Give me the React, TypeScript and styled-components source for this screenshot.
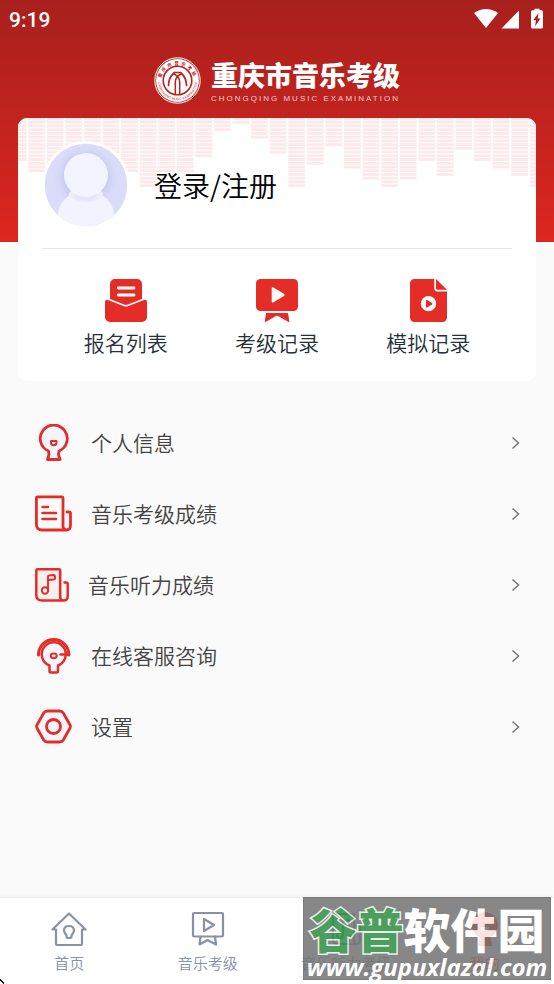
import React from "react";
import styled, { createGlobalStyle } from "styled-components";

const RED = "#e52d27";
const SLATE = "#8992a5";

const GlobalStyle = createGlobalStyle`
  *, *::before, *::after { box-sizing: border-box; }
  body {
    margin: 0;
    background: #fafafa;
    font-family: "Noto Sans CJK SC", "Noto Sans", sans-serif;
    font-weight: 350;
  }
  button { font: inherit; border: 0; background: none; padding: 0; cursor: pointer; }
  a { color: inherit; text-decoration: none; }
  svg { display: block; flex: none; }
`;

const Page = styled.div`
  position: relative;
  display: flex;
  flex-direction: column;
  min-height: 100vh;
  overflow: hidden;
  background: linear-gradient(#a8201d, #dd261f) top / 100% 242px no-repeat #fafafa;
`;

const StatusBar = styled.div`
  display: flex;
  align-items: center;
  justify-content: space-between;
  height: 40px;
  padding: 0 9px;
  color: #fff;
  font: 500 21px/40px Roboto, sans-serif;
`;

const StatusIcons = styled.div`
  display: flex;
  align-items: center;
  padding-bottom: 2px;
`;

const Brand = styled.header`
  display: flex;
  justify-content: center;
  align-items: center;
  gap: 10px;
  height: 78px;
  padding-top: 3px;
  color: #fff;
`;

const BrandText = styled.div`
  display: flex;
  flex-direction: column;
`;

const BrandName = styled.h1`
  margin: 0;
  font-size: 27px;
  font-weight: 900;
  line-height: 36px;
`;

const BrandLatin = styled.span`
  font: 8px/12px "Liberation Sans", sans-serif;
  letter-spacing: 2px;
  white-space: nowrap;
  opacity: 0.75;
  margin-right: -2px;
`;

const Card = styled.section`
  position: relative;
  margin: 0 18px;
  padding: 0 24px 23px;
  background: #fff;
  border-radius: 9px;
  overflow: hidden;
`;

const Equalizer = styled.svg`
  position: absolute;
  top: 0;
  left: 0;
  width: 100%;
`;

const Profile = styled.button`
  position: relative;
  display: flex;
  align-items: center;
  gap: 24px;
  width: 100%;
  height: 131px;
  padding-top: 4px;
  border-bottom: 1px solid #e4e4e4;
  color: #000;
  font-size: 28px;
  line-height: 40px;
`;

const Actions = styled.div`
  display: flex;
  padding: 30px 8px 0;
`;

const Action = styled.button`
  flex: 1;
  display: flex;
  flex-direction: column;
  align-items: center;
  gap: 4px;
  color: #26303c;
  font-size: 21px;
  line-height: 32px;
`;

const Menu = styled.nav`
  display: flex;
  flex-direction: column;
  flex: 1;
  padding: 26px 34px 0 35px;
`;

const MenuLink = styled.a`
  display: flex;
  align-items: center;
  gap: 19px;
  height: 71px;
  color: #444;
  font-size: 21px;
  line-height: 32px;
`;

const MenuLabel = styled.span`
  flex: 1;
  padding-bottom: 1px;
`;

const TabBar = styled.nav`
  display: grid;
  grid-template-columns: repeat(4, 1fr);
  height: 86px;
  background: #fff;
  box-shadow: 0 -1px 3px rgba(0, 0, 0, 0.08);
`;

const Tab = styled.a<{ $active?: boolean }>`
  display: flex;
  flex-direction: column;
  align-items: center;
  gap: 4px;
  padding-top: 13px;
  color: ${(p) => (p.$active ? RED : SLATE)};
  font-size: 15px;
  line-height: 24px;
  white-space: nowrap;
`;

const Watermark = styled.div`
  position: absolute;
  right: 3px;
  bottom: 4px;
  width: 248px;
  height: 83px;
  display: flex;
  flex-direction: column;
  align-items: center;
  background: #747474;
  border: 1px solid #666;
  color: #fff;
  opacity: 0.86;
  pointer-events: none;
`;

const WatermarkName = styled.div`
  font-size: 47px;
  font-weight: 900;
  line-height: 50px;
  height: 54px;
  padding-top: 5px;
  white-space: nowrap;
`;

const WatermarkAccent = styled.span`
  color: #2f8f45;
  -webkit-text-stroke: 3px #e8eee8;
  paint-order: stroke fill;
`;

const WatermarkUrl = styled.div`
  font: italic 700 24px/30px "Open Sans", sans-serif;
  white-space: nowrap;
`;

const Pointer = styled.svg`
  position: absolute;
  left: 0;
  bottom: 0;
`;

const Emblem = () => (
  <svg width="47" height="47" viewBox="0 0 47 47" fill="none" aria-hidden="true">
    <defs>
      <path id="ringTop" d="M6.5 25 A17 17 0 1 1 40.5 25" />
      <path id="ringBottom" d="M3.8 23.5 A19.7 19.7 0 0 0 43.2 23.5" />
    </defs>
    <circle cx="23.5" cy="23.5" r="22.7" stroke="#fff" strokeWidth="1" />
    <circle cx="23.5" cy="23.5" r="21.4" fill="#fff" />
    <circle cx="23.5" cy="23.5" r="13.7" fill="#fff" />
    <text fill="#b9231f" fontSize="4.500" fontWeight="700">
      <textPath href="#ringTop" startOffset="50%" textAnchor="middle" letterSpacing="2">重庆市音乐考级</textPath>
    </text>
    <text fill="#b9231f" fontSize="3.4" fontWeight="400" fontFamily="Liberation Sans">
      <textPath href="#ringBottom" startOffset="50%" textAnchor="middle">CHONGQING MUSIC EXAMINATION</textPath>
    </text>
    <circle cx="23.5" cy="23.5" r="14.300" stroke="#b9231f" strokeWidth="1.600" />
    <g stroke="#b9231f" strokeLinecap="round">
      <path d="M21.300 37 V25 Q21.300 20 27.500 16.500 M25.700 37 V25 Q25.700 20 19.500 16.500" strokeWidth="1.500" />
      <path d="M14.500 28.500 Q14.500 20.500 20.500 15.500 H26.500 Q32.500 20.500 32.500 28.500" strokeWidth="1.700" />
    </g>
  </svg>
);

const rows = [12, 15, 15, 15, 15, 15, 15, 19, 15, 15, 11, 4, 2, 6, 10, 19, 13, 8, 14, 17, 19, 17, 12, 16, 9, 12, 14, 16, 19];

const Bars = () => (
  <Equalizer viewBox="0 0 518 70" fill="#fde9ea" aria-hidden="true">
    {rows.map((count, col) =>
      Array.from({ length: count }, (_, r) => (
        <rect key={`${col}-${r}`} x={-8.4 + col * 18.58} y={-0.9 + r * 3.73} width="16.8" height="2.8" />
      ))
    )}
  </Equalizer>
);

const Avatar = () => (
  <svg width="88" height="88" viewBox="0 0 88 88" aria-hidden="true">
    <defs>
      <clipPath id="face"><circle cx="44" cy="44" r="41.300" /></clipPath>
      <radialGradient id="glow">
        <stop offset="0.6" stopColor="#c6c9ee" />
        <stop offset="1" stopColor="#dadcf9" stopOpacity="0" />
      </radialGradient>
      <radialGradient id="chin">
        <stop offset="0.6" stopColor="#e4e6f8" />
        <stop offset="1" stopColor="#f1f3ff" />
      </radialGradient>
    </defs>
    <circle cx="44" cy="44" r="44" fill="#fff" />
    <g clipPath="url(#face)">
      <rect width="88" height="88" fill="#dadcf9" />
      <circle cx="44" cy="36" r="34" fill="url(#glow)" />
      <circle cx="44" cy="78" r="29" fill="#f1f3ff" />
      <ellipse cx="44" cy="54" rx="17" ry="8" fill="url(#chin)" />
      <circle cx="44" cy="34" r="22" fill="#f2f4ff" />
    </g>
  </svg>
);

const EnvelopeIcon = () => (
  <svg width="42" height="43" viewBox="0 0 42 43" fill={RED} aria-hidden="true">
    <path d="M5 20 V5 a5 5 0 0 1 5-5 H32 a5 5 0 0 1 5 5 V20 L23 25.5 q-2 .8-4 0Z" />
    <path d="M0 23 q0-3 3-2 L18.5 27 q2.500 1 5 0 L39 21 q3-1 3 2 V38 a5 5 0 0 1-5 5 H5 a5 5 0 0 1-5-5Z" />
    <path d="M13.300 9 H29 M13.300 16 H29" stroke="#fff" strokeWidth="2.8" strokeLinecap="round" />
  </svg>
);

const BoardIcon = () => (
  <svg width="42" height="43" viewBox="0 0 42 43" fill={RED} aria-hidden="true">
    <rect width="42" height="32" rx="4.5" />
    <path d="M10 34 H32 L33.300 42 q0 1.500-1.300.7 L22.500 37.200 q-1.500-.8-3 0 L10 42.700 q-1.300.8-1.200-.7Z" />
    <path d="M15.700 9.500 q0-2 1.800-1 L28 14.800 q1.400 1.200 0 2.300 L17.500 23.300 q-1.800 1-1.800-1Z" fill="#fafafa" />
  </svg>
);

const FilePlayIcon = () => (
  <svg width="37" height="43" viewBox="0 0 37 43" fill={RED} aria-hidden="true">
    <path d="M4.500 0 H24.300 V9.500 a3 3 0 0 0 3 3 H37 V38.500 a4.500 4.500 0 0 1-4.500 4.500 H4.500 a4.500 4.500 0 0 1-4.500-4.500 V4.500 a4.500 4.500 0 0 1 4.500-4.500Z" />
    <path d="M26 0 L37 10.800 H27.500 a1.500 1.500 0 0 1-1.500-1.500Z" />
    <circle cx="18.500" cy="24.700" r="7.600" fill="#fafafa" />
    <path d="M16 21.500 q0-1 1-.5 L22 24 q1 .7 0 1.400 L17 28.400 q-1 .5-1-.5Z" />
  </svg>
);

const outline = {
  fill: "none",
  stroke: RED,
  strokeWidth: 2.8,
  strokeLinecap: "round" as const,
  strokeLinejoin: "round" as const,
  "aria-hidden": true,
};

const BulbIcon = () => (
  <svg width="37" height="37" viewBox="0 0 37 37" {...outline}>
    <path d="M13.500 27 A13.500 13.500 0 1 1 24 27 L23.500 30.500 L25 35.500 H12.500 L14 30.500Z" fill="#f5f5ff" />
    <path d="M16 17 H21.500 V18.500 a2.750 2.750 0 0 1-5.500 0Z" strokeWidth="2" />
  </svg>
);

const ScoreIcon = () => (
  <svg width="37" height="37" viewBox="0 0 37 37" {...outline}>
    <path d="M31 35 H7 Q1.400 35 1.400 29 V3 Q1.400 1.900 2.500 1.900 H27 Q28 1.900 28 3 V31 Q28 35 31.500 35 Q35.500 35 35.500 30 V18.500 Q35.500 17 34 17 H32" />
    <path d="M7.500 12 H13 M7.500 18 H21 M7.500 24 H21" strokeWidth="2.500" />
  </svg>
);

const ListeningIcon = () => (
  <svg width="34" height="34" viewBox="0 0 34 34" {...outline} strokeWidth={2.5}>
    <path d="M1.300 1.300 H25.200 V32.500 H7 Q1.300 32.500 1.300 27Z" fill="#faeeee" stroke="none" />
    <path d="M28 32.500 H7 Q1.300 32.500 1.300 27 V2.500 Q1.300 1.300 2.500 1.300 H24 Q25.200 1.300 25.200 2.500 V29 Q25.200 32.500 28.500 32.500 Q32.700 32.500 32.700 28 V16 Q32.700 14.500 31 14.500 H29.500" />
    <path d="M13 22.500 V8.500 Q13 7.500 14 7.500 L18.500 7 Q20 7 20 8.500 V10.500 Q20 11.500 18.500 11.500 L13.500 12" strokeWidth="1.900" />
    <circle cx="10" cy="22.500" r="3.200" strokeWidth="1.900" />
  </svg>
);

const SupportIcon = () => (
  <svg width="37" height="37" viewBox="0 0 37 37" {...outline}>
    <path d="M3.500 18 V16.500 A15.200 15.200 0 0 1 33.800 16.500 V18" strokeWidth="3" />
    <path d="M14.500 28.500 A12 12 0 1 1 23 28.500 V34 Q23 35.500 21.500 35.500 H16 Q14.500 35.500 14.500 34Z" strokeWidth="2.500" fill="#f5f5ff" />
    <ellipse cx="18.700" cy="18.800" rx="3" ry="2.400" strokeWidth="2" />
    <path d="M25.500 17.500 H34" strokeWidth="2.500" />
  </svg>
);

const SettingsIcon = () => (
  <svg width="37" height="37" viewBox="0 0 37 37" {...outline}>
    <path d="M12.500 3 H24.500 Q27 3 28.300 5 L34.800 16.500 Q36 18.500 34.800 20.500 L28.300 32 Q27 34 24.500 34 H12.500 Q10 34 8.700 32 L2.200 20.500 Q1 18.500 2.200 16.500 L8.700 5 Q10 3 12.500 3Z" fill="#f5f5ff" />
    <circle cx="18.500" cy="18.500" r="7" />
  </svg>
);

const Chevron = () => (
  <svg width="9" height="14" viewBox="0 0 9 14" fill="none" stroke="#777" strokeWidth="1.5" aria-hidden="true">
    <path d="M1.500 1.500 L7.500 7 L1.500 12.500" />
  </svg>
);

const line = {
  fill: "none",
  stroke: "currentColor",
  strokeWidth: 2.2,
  strokeLinejoin: "round" as const,
  strokeLinecap: "round" as const,
  "aria-hidden": true,
};

const HomeIcon = () => (
  <svg width="36" height="36" viewBox="0 0 36 36" {...line}>
    <path d="M1.500 18.500 L18 2.500 L34.500 18.500 H31 V33 Q31 34 30 34 H6 Q5 34 5 33 V18.500Z" />
    <path d="M15.500 24.500 Q13 21.500 13 19.500 Q13 15 18 15 Q23 15 23 19.500 Q23 21.500 20.500 24.500 V25.500 Q20.500 27 18 27 Q15.500 27 15.500 25.500Z" />
  </svg>
);

const ExamIcon = () => (
  <svg width="36" height="36" viewBox="0 0 36 36" {...line}>
    <rect x="3" y="2" width="30" height="23.500" rx="1.200" />
    <path d="M14 8 L24 14 L14 20Z M10.500 25.500 L9.500 33.500 L17.500 29 L26 33.500 L25 25.500" />
  </svg>
);

const ListenTabIcon = () => (
  <svg width="36" height="36" viewBox="0 0 36 36" {...line}>
    <path d="M5 3 H26 V28 Q26 33 30 33 H9 Q5 33 5 29Z M26 15 H32 V30 Q32 33 29 33" />
    <path d="M15 24 V10 L21 9 V13" />
    <circle cx="12" cy="24" r="3" />
  </svg>
);

const MineIcon = () => (
  <svg width="36" height="36" viewBox="0 0 36 36" fill="currentColor" aria-hidden="true">
    <path d="M12.500 26 A13 13 0 1 1 23.500 26 L25 35 H11Z" />
    <path d="M14 16 H22 a4 4 0 0 1-8 0Z" fill="#fff" />
  </svg>
);

const actions = [
  { label: "报名列表", icon: <EnvelopeIcon /> },
  { label: "考级记录", icon: <BoardIcon /> },
  { label: "模拟记录", icon: <FilePlayIcon /> },
];

const menu = [
  { label: "个人信息", icon: <BulbIcon /> },
  { label: "音乐考级成绩", icon: <ScoreIcon /> },
  { label: "音乐听力成绩", icon: <ListeningIcon /> },
  { label: "在线客服咨询", icon: <SupportIcon /> },
  { label: "设置", icon: <SettingsIcon /> },
];

const tabs = [
  { label: "首页", icon: <HomeIcon /> },
  { label: "音乐考级", icon: <ExamIcon /> },
  { label: "音乐听力考级", icon: <ListenTabIcon /> },
  { label: "我的", icon: <MineIcon />, active: true },
];

export default function App() {
  return (
    <>
      <GlobalStyle />
      <Page>
        <StatusBar>
          <span>9:19</span>
          <StatusIcons>
            <svg width="72" height="22" viewBox="0 0 72 22" fill="#fff" aria-hidden="true">
              <path d="M1 5 Q13 -3 25 5 L13 20Z" />
              <path d="M46 2.500 V20.500 H28.500Z" />
              <path d="M61.500 .7 H66.500 V2.300 H68.500 Q70 2.300 70 4 V19 Q70 20.500 68.500 20.500 H59.500 Q58 20.500 58 19 V4 Q58 2.300 59.500 2.300 H61.500Z" />
              <path d="M65.500 5 L60.300 12.300 H63 L62 18.500 L67.500 10.500 H64.700Z" fill="#a8201d" />
            </svg>
          </StatusIcons>
        </StatusBar>
        <Brand>
          <Emblem />
          <BrandText>
            <BrandName>重庆市音乐考级</BrandName>
            <BrandLatin>CHONGQING MUSIC EXAMINATION</BrandLatin>
          </BrandText>
        </Brand>
        <Card>
          <Bars />
          <Profile type="button">
            <Avatar />
            登录/注册
          </Profile>
          <Actions>
            {actions.map((a) => (
              <Action key={a.label} type="button">
                {a.icon}
                {a.label}
              </Action>
            ))}
          </Actions>
        </Card>
        <Menu>
          {menu.map((m) => (
            <MenuLink key={m.label} href="#">
              {m.icon}
              <MenuLabel>{m.label}</MenuLabel>
              <Chevron />
            </MenuLink>
          ))}
        </Menu>
        <TabBar>
          {tabs.map((t) => (
            <Tab key={t.label} href="#" $active={t.active}>
              {t.icon}
              {t.label}
            </Tab>
          ))}
        </TabBar>
        <Watermark>
          <WatermarkName>
            <WatermarkAccent>谷普</WatermarkAccent>软件园
          </WatermarkName>
          <WatermarkUrl>www.gupuxlazal.com</WatermarkUrl>
        </Watermark>
        <Pointer width="5" height="5" viewBox="0 0 5 5" fill="#111" aria-hidden="true">
          <path d="M0 0 H1 V1 H2 V2 H3 V3 H4 V5 H3 V4 H2 V3 H1 V2 H0Z" />
        </Pointer>
      </Page>
    </>
  );
}
